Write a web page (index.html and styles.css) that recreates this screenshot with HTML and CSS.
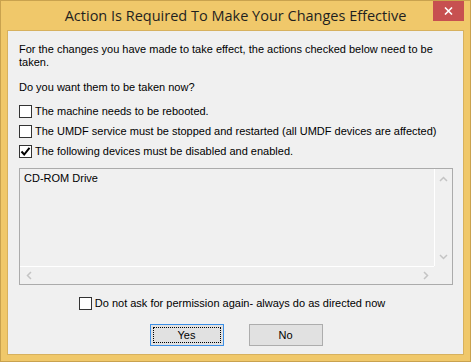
FILE: index.html
```html
<!doctype html>
<html>
<head>
    <title>Action Is Required To Make Your Changes Effective</title>
    <link rel="stylesheet" href="styles.css">
</head>
<body>
    <div class="window">
        <div class="title-bar">
            <span class="title-spacer"></span>
            <div class="title-text">Action Is Required To Make Your Changes Effective</div>
            <button class="close-button">
                <svg width="9" height="8" viewBox="0 0 9 8"><path d="M1 0.5 L8 7.5 M8 0.5 L1 7.5" stroke="#fff" stroke-width="1.6"/></svg>
            </button>
        </div>
        <div class="client">
            <p class="intro">For the changes you have made to take effect, the actions checked below need to be taken.</p>
            <p class="question">Do you want them to be taken now?</p>
            <div class="checks">
                <label class="check-row"><span class="checkbox"></span>The machine needs to be rebooted.</label>
                <label class="check-row"><span class="checkbox"></span>The UMDF service must be stopped and restarted (all UMDF devices are affected)</label>
                <label class="check-row"><span class="checkbox checked"><svg width="11" height="11" viewBox="0 0 11 11"><path d="M1.5 5.5 L4.2 8.5 L9.5 1.8" fill="none" stroke="#000" stroke-width="2"/></svg></span>The following devices must be disabled and enabled.</label>
            </div>
            <div class="listbox">
                <div class="list-items">
                    <div class="list-item">CD-ROM Drive</div>
                </div>
                <div class="vscroll">
                    <svg width="9" height="6" viewBox="0 0 9 6"><path d="M1 5 L4.5 1.5 L8 5" fill="none" stroke="#c4c4c4" stroke-width="1.5"/></svg>
                    <svg width="9" height="6" viewBox="0 0 9 6"><path d="M1 1 L4.5 4.5 L8 1" fill="none" stroke="#c4c4c4" stroke-width="1.5"/></svg>
                </div>
                <div class="hscroll">
                    <svg width="6" height="9" viewBox="0 0 6 9"><path d="M5 1 L1.5 4.5 L5 8" fill="none" stroke="#c4c4c4" stroke-width="1.5"/></svg>
                    <svg width="6" height="9" viewBox="0 0 6 9"><path d="M1 1 L4.5 4.5 L1 8" fill="none" stroke="#c4c4c4" stroke-width="1.5"/></svg>
                </div>
                <div class="corner"></div>
            </div>
            <label class="check-row ask-row"><span class="checkbox"></span>Do not ask for permission again- always do as directed now</label>
            <div class="buttons">
                <button class="dlg-button default"><span class="focus">Yes</span></button>
                <button class="dlg-button">No</button>
            </div>
        </div>
    </div>
</body>
</html>
```

FILE: styles.css
```css
body {
    margin: 0;
    padding: 0;
    background-color: #f0c86a;
}
.window {
    width: 471px;
    height: 362px;
    box-sizing: border-box;
    border: 1px solid #c9a24e;
    background-color: #f0c86a;
    padding: 0 6px 6px 6px;
    display: flex;
    flex-direction: column;
}
.title-bar {
    height: 29px;
    display: grid;
    grid-template-columns: 31px 1fr 31px;
    align-items: start;
}
.title-text {
    font-family: "Open Sans", "Noto Sans", sans-serif;
    font-size: 14.5px;
    color: #1f1f1f;
    text-align: center;
    line-height: 20px;
    padding-top: 5px;
}
.close-button {
    width: 31px;
    height: 20px;
    margin: 0;
    padding: 0;
    border: none;
    background-color: #c75050;
    display: flex;
    align-items: center;
    justify-content: center;
}
.client {
    flex: 1;
    border: 1px solid #d7b15e;
    background-color: #f0f0f0;
    padding: 12px 10px 0 11px;
    font-family: "Liberation Sans", Arial, sans-serif;
    font-size: 11px;
    color: #000;
}
.intro {
    margin: 0;
    line-height: 13px;
}
.question {
    margin: 12px 0 0 0;
    line-height: 13px;
}
.checks {
    margin-top: 11px;
    display: flex;
    flex-direction: column;
    gap: 7px;
}
.check-row {
    display: flex;
    align-items: center;
    height: 13px;
    line-height: 13px;
    white-space: nowrap;
}
.checkbox {
    width: 11px;
    height: 11px;
    border: 1px solid #333;
    background-color: #fff;
    margin-right: 3px;
    display: flex;
    align-items: center;
    justify-content: center;
    flex-shrink: 0;
}
.listbox {
    margin-top: 10px;
    width: 434px;
    height: 117px;
    box-sizing: border-box;
    border: 1px solid #ababab;
    display: grid;
    grid-template-columns: 1fr 18px;
    grid-template-rows: 1fr 18px;
}
.list-items {
    padding: 3px 4px;
}
.list-item {
    line-height: 13px;
}
.vscroll {
    border-left: 1px solid #fff;
    display: flex;
    flex-direction: column;
    justify-content: space-between;
    align-items: center;
    padding: 7px 0 6px 0;
}
.hscroll {
    border-top: 1px solid #fff;
    display: flex;
    justify-content: space-between;
    align-items: center;
    padding: 0 5px 0 6px;
}
.ask-row {
    margin-top: 12px;
    justify-content: center;
    padding-right: 8px;
}
.buttons {
    margin-top: 14px;
    display: flex;
    justify-content: center;
    gap: 25px;
}
.dlg-button {
    width: 74px;
    height: 22px;
    margin: 0;
    padding: 0;
    border: 1px solid #adadad;
    background-color: #e1e1e1;
    font-family: "Liberation Sans", Arial, sans-serif;
    font-size: 11px;
    color: #000;
}
.dlg-button.default {
    border-color: #3c8fe6;
    padding: 2px;
}
.focus {
    display: flex;
    align-items: center;
    justify-content: center;
    height: 100%;
    box-sizing: border-box;
    border: 1px dotted #000;
}
```
